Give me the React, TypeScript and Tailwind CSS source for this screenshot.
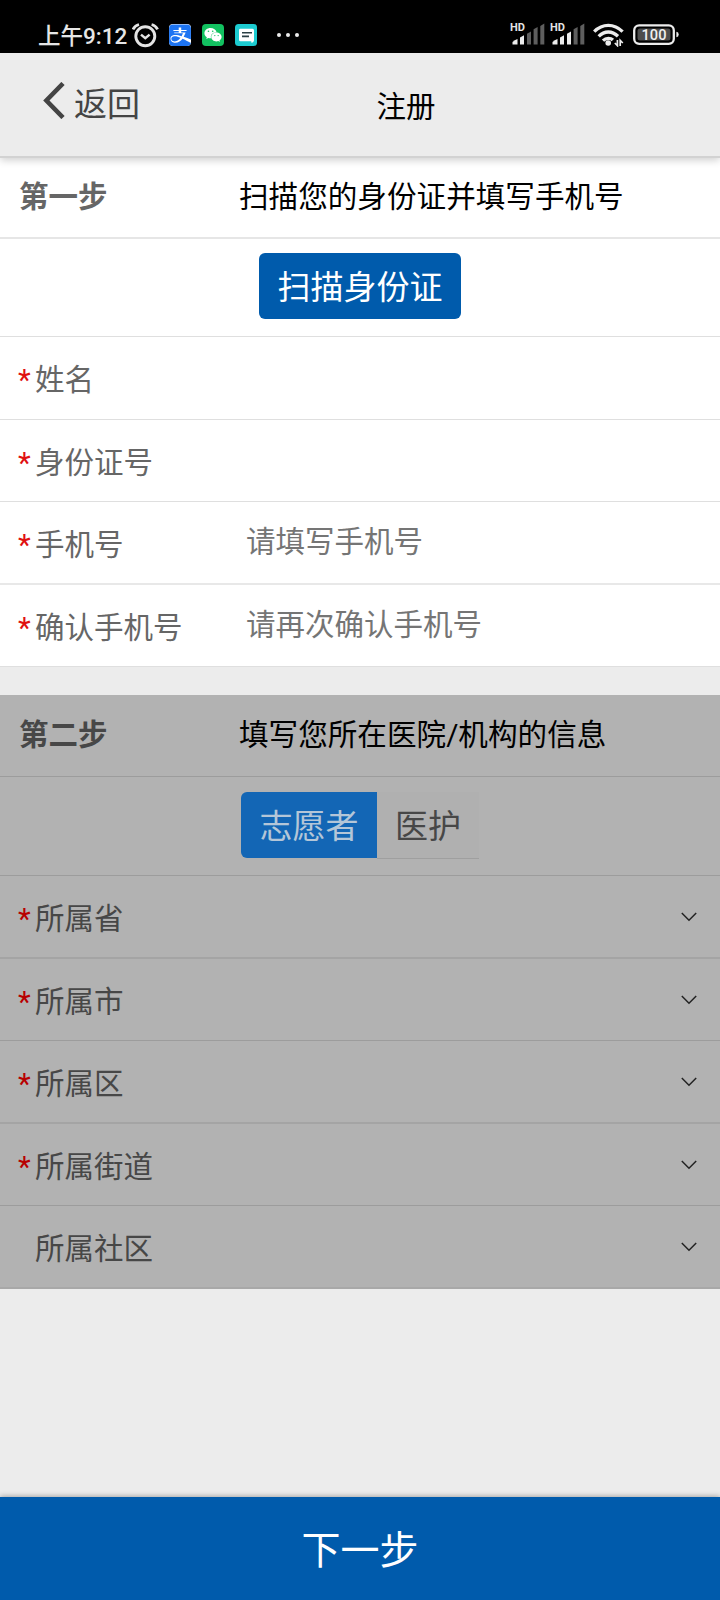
import { FaAlipay, FaWeixin } from "react-icons/fa";

interface Field {
    label: string;
    required?: boolean;
    placeholder?: string;
    className: string;
}

const personalFields: Field[] = [
    { label: "姓名", required: true, className: "h-[83px] border-b border-[#dfdfdf]" },
    { label: "身份证号", required: true, className: "h-[82px] border-b border-[#dfdfdf]" },
    {
        label: "手机号",
        required: true,
        placeholder: "请填写手机号",
        className: "h-[83px] border-b-2 border-[#e8e8e8]"
    },
    {
        label: "确认手机号",
        required: true,
        placeholder: "请再次确认手机号",
        className: "h-[82px] border-b border-[#dfdfdf]"
    }
];

const regionFields: Field[] = [
    { label: "所属省", required: true, className: "h-[83px] border-b-2 border-[#a4a4a4]" },
    { label: "所属市", required: true, className: "h-[82px] border-b border-[#9c9c9c]" },
    { label: "所属区", required: true, className: "h-[83px] border-b-2 border-[#a4a4a4]" },
    { label: "所属街道", required: true, className: "h-[82px] border-b border-[#9c9c9c]" },
    { label: "所属社区", className: "h-[83px] border-b-2 border-[#a8a8a8]" }
];

const AlarmIcon = () => (
    <svg width="27" height="25" viewBox="0 0 27 25" fill="none" stroke="#e4e4e4">
        <circle cx="13.3" cy="13.3" r="9.5" strokeWidth="2.9" />
        <path d="M9 11.6l4.3 3.6 4.3-3.6" strokeWidth="2.5" />
        <path d="M1 6.4Q3 2.5 7 1.5M25.6 6.4Q23.6 2.5 19.6 1.5" strokeWidth="2.8" />
    </svg>
);

const MessageIcon = () => (
    <svg width="22" height="22" viewBox="0 0 22 22">
        <rect width="22" height="22" rx="3.5" fill="#1ccbd0" />
        <path d="M5 4.8h12.5A1.5 1.5 0 0 1 19 6.3v10.2q-.2 2-2.4 2.4l-.4-1.7H5.5A1.5 1.5 0 0 1 4 15.7V6.3A1.5 1.5 0 0 1 5 4.8z" fill="#fff" />
        <path d="M7 8.8h10M7 12.4h7" stroke="#2b3f44" strokeWidth="1.6" />
    </svg>
);

const SignalIcon = ({ level }: { level: number }) => (
    <div className="relative h-[22px] w-[34px]">
        <span className="absolute -left-px -top-px w-[18px] text-[11px] font-bold leading-[11px] text-[#e4e4e4]">HD</span>
        <svg width="34" height="22" viewBox="0 0 34 22">
            {[
                "M1.5 21.5v-2.6q2-2 5-2.9v5.5z",
                "M9 21.5v-7l4-2.2v9.2z",
                "M16 21.5V10.8l4-2.3v13z",
                "M22.6 21.5V6.3l4-2.3v17.5z",
                "M29.3 21.5V3l4-2.4v20.9z"
            ].map((d, i) => (
                <path key={d} d={d} fill={i < level ? "#ededed" : "#5e5e5e"} />
            ))}
        </svg>
    </div>
);

const WifiIcon = () => (
    <svg width="31" height="24" viewBox="0 0 31 24" fill="none" stroke="#ececec" strokeWidth="3.3">
        <path d="M1.2 8.6Q7.5 2.4 15.3 2.4T29.6 8.6" />
        <path d="M5.7 13.3Q10 9 15.3 9t9.7 4.3" />
        <path d="M10 17.6q2.3-2.2 5.3-2.2t4.6 1.6" />
        <circle cx="15.2" cy="20" r="2.8" fill="#ececec" stroke="none" />
        <path d="M24.4 17v5.6l-2.6-2.6M27.2 23v-5.6l2.6 2.6" strokeWidth="1.7" />
    </svg>
);

const BatteryIcon = () => (
    <svg width="46" height="23" viewBox="0 0 46 23">
        <rect x="1.2" y="2.4" width="39.6" height="18.4" rx="5" fill="none" stroke="#ececec" strokeWidth="2.3" />
        <rect x="4.5" y="5.6" width="33" height="12" rx="2.5" fill="#4d4d4d" />
        <path d="M43.4 8.7q2.3.3 2.3 2.8t-2.3 2.7z" fill="#ececec" />
        <text x="21" y="17" textAnchor="middle" fontSize="14.6" fontWeight="500" fontFamily="Roboto, sans-serif" fill="#f0f0f0">
            100
        </text>
    </svg>
);

const StatusBar = () => (
    <div className="flex h-[53px] shrink-0 items-start justify-between bg-black pl-[38px] pr-[41px] pt-[23px] text-[#e6e6e6]">
        <div className="flex items-start">
            <span className="mt-px w-[94px] whitespace-nowrap text-[22.5px] font-medium leading-6">上午9:12</span>
            <AlarmIcon />
            <span className="ml-[10px] mt-px flex h-[22px] w-[22px] items-center justify-center overflow-hidden rounded-[4px] bg-[#1d74f2]">
                <span className="bg-white">
                    <FaAlipay className="h-[25px] w-[22px] text-[#1d74f2]" />
                </span>
            </span>
            <span className="ml-[11px] mt-px flex h-[22px] w-[22px] items-center justify-center rounded-[4px] bg-[#12c160]">
                <FaWeixin className="h-[18px] w-[18px] text-white" />
            </span>
            <span className="ml-[11px] mt-px">
                <MessageIcon />
            </span>
            <span className="ml-[20px] mt-[10px] flex gap-[5px]">
                <i className="h-[4px] w-[4px] rounded-full bg-[#ececec]" />
                <i className="h-[4px] w-[4px] rounded-full bg-[#ececec]" />
                <i className="h-[4px] w-[4px] rounded-full bg-[#ececec]" />
            </span>
        </div>
        <div className="flex items-start">
            <SignalIcon level={2} />
            <span className="ml-[6px]">
                <SignalIcon level={3} />
            </span>
            <span className="ml-[8px]">
                <WifiIcon />
            </span>
            <span className="ml-[9px]">
                <BatteryIcon />
            </span>
        </div>
    </div>
);

const Label = ({ label, required, dim }: { label: string; required?: boolean; dim?: boolean }) => (
    <label className={`flex w-[228px] shrink-0 pt-[4px] ${dim ? "text-[#474747]" : "text-[#666]"}`}>
        <span className={`w-[17px] ${dim ? "text-[#b80000]" : "text-[#e01010]"}`}>{required && "*"}</span>
        {label}
    </label>
);

const ChevronDown = () => (
    <svg width="16" height="10" viewBox="0 0 16 10" fill="none" stroke="#222" strokeWidth="1.5">
        <path d="M.8 1l7.2 7.2L15.2 1" />
    </svg>
);

export default function App() {
    return (
        <div className="flex h-[1600px] w-[720px] flex-col overflow-hidden bg-[#ececec] font-['Roboto','Noto_Sans_CJK_SC',sans-serif] text-[29.5px] leading-[40px]">
            <StatusBar />
            <header className="relative z-10 grid h-[105px] shrink-0 grid-cols-[1fr_auto_1fr] items-center border-b-2 border-[#d2d2d2] bg-[#ececec] shadow-[0_2px_8px_rgba(0,0,0,0.2)]">
                <button className="flex items-center pl-[43px] text-[33px] text-[#444]">
                    <svg width="22" height="37" viewBox="0 0 22 37" fill="none" stroke="#444" strokeWidth="4.6" className="-mt-[9px]">
                        <path d="M20 1.5L3.4 18.5l16.6 17" />
                    </svg>
                    <span className="ml-[9px]">返回</span>
                </button>
                <h1 className="pl-[92px] pt-[4px] text-black">注册</h1>
                <span />
            </header>

            <section className="bg-white">
                <div className="flex h-[81px] items-center border-b-2 border-[#e6e6e6] pb-[2px] pl-[19px]">
                    <h2 className="w-[220px] font-bold text-[#666]">第一步</h2>
                    <p className="text-[29.6px] text-black">扫描您的身份证并填写手机号</p>
                </div>
                <div className="flex h-[98px] items-start justify-center border-b border-[#dfdfdf] pt-[14px]">
                    <button className="h-[66px] w-[202px] rounded-[6px] bg-[#005bac] pt-[3px] text-[33px] text-white">扫描身份证</button>
                </div>
                {personalFields.map((field) => (
                    <div key={field.label} className={`flex items-center pl-[18px] ${field.className}`}>
                        <Label label={field.label} required={field.required} />
                        {field.placeholder && (
                            <input
                                className="-mt-[2px] min-w-0 flex-1 bg-transparent outline-none placeholder:text-[#757575]"
                                placeholder={field.placeholder}
                            />
                        )}
                    </div>
                ))}
            </section>

            <section className="mt-[28px] bg-[#b2b2b2]">
                <div className="flex h-[82px] items-center border-b border-[#9c9c9c] pb-[2px] pl-[19px]">
                    <h2 className="w-[220px] font-bold text-[#474747]">第二步</h2>
                    <p className="text-[29.6px] text-black">填写您所在医院/机构的信息</p>
                </div>
                <div className="flex h-[99px] items-start border-b border-[#9c9c9c] pl-[241px] pt-[15px] text-[33px]">
                    <button className="h-[66px] w-[136px] rounded-l-[6px] bg-[#1366b5] pt-[3px] text-[#b4c6d8]">志愿者</button>
                    <button className="h-[67px] w-[102px] border-b border-[#9f9f9f] bg-[#b0b0b0] pt-[3px] text-[#474747]">医护</button>
                </div>
                {regionFields.map((field) => (
                    <div key={field.label} className={`flex items-center justify-between pl-[18px] pr-[23px] ${field.className}`}>
                        <Label label={field.label} required={field.required} dim />
                        <ChevronDown />
                    </div>
                ))}
            </section>

            <footer className="mt-auto h-[103px] shrink-0 bg-[#005bac] shadow-[0_-1px_5px_rgba(0,0,0,0.3)]">
                <button className="h-full w-full pt-[4px] text-[39px] text-white">下一步</button>
            </footer>
        </div>
    );
}
